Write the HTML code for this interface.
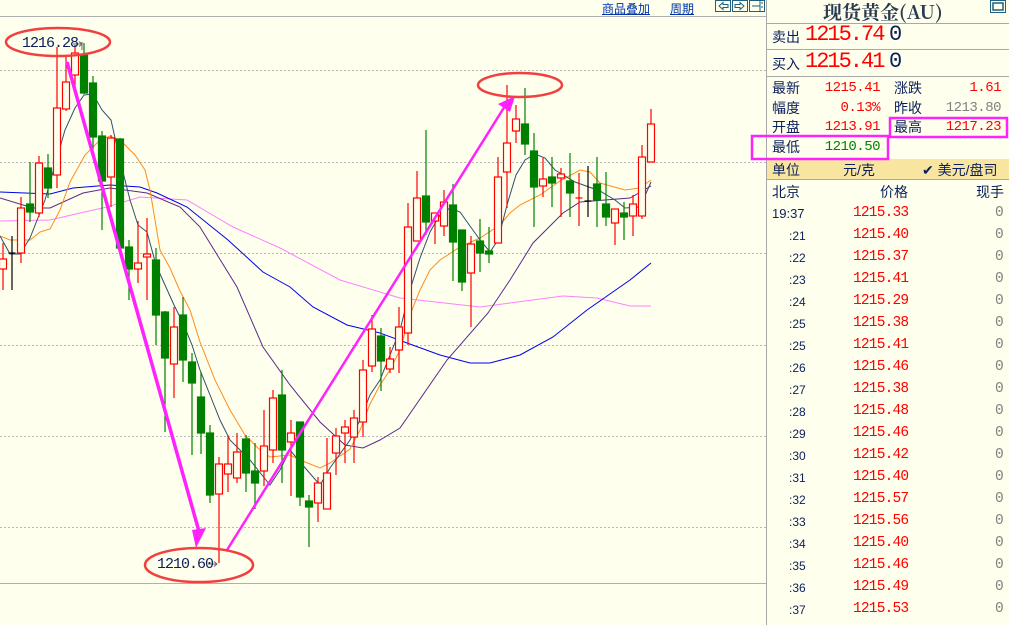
<!DOCTYPE html>
<html><head><meta charset="utf-8">
<style>
*{margin:0;padding:0;box-sizing:border-box}
body{width:1009px;height:625px;overflow:hidden;background:#FFFFEE;position:relative;font-family:"Liberation Sans","Noto Sans CJK SC",sans-serif}
.t{position:absolute;white-space:nowrap}
.nv{color:#0A1F5C}
.r{color:#FF0000}
.mono{font-family:"Liberation Mono","Noto Sans CJK SC",monospace}
</style></head><body>
<svg width="1009" height="625" style="position:absolute;left:0;top:0" xmlns="http://www.w3.org/2000/svg">
<rect width="1009" height="625" fill="#FFFFEE"/>
<line x1="0" y1="16.5" x2="766" y2="16.5" stroke="#B0B0B0"/>
<line x1="0" y1="583.5" x2="766" y2="583.5" stroke="#B0B0B0"/>
<g stroke="#B8B8B8" stroke-dasharray="2,2">
<line x1="0" y1="70.5" x2="766" y2="70.5"/><line x1="0" y1="162.5" x2="766" y2="162.5"/>
<line x1="0" y1="253.5" x2="766" y2="253.5"/><line x1="0" y1="345.5" x2="766" y2="345.5"/>
<line x1="0" y1="436.5" x2="766" y2="436.5"/><line x1="0" y1="527.5" x2="766" y2="527.5"/>
</g>
<line x1="766.5" y1="0" x2="766.5" y2="625" stroke="#A8A8A8"/>
<g stroke="#1F5F7F" fill="none">
<rect x="715.5" y="0.5" width="15" height="11"/><rect x="732.5" y="0.5" width="15" height="11"/><rect x="749.5" y="0.5" width="15" height="11"/>
<path d="M719 6 L723 2.5 L723 4.5 L728 4.5 L728 7.5 L723 7.5 L723 9.5 Z"/>
<path d="M744 6 L740 2.5 L740 4.5 L735 4.5 L735 7.5 L740 7.5 L740 9.5 Z"/>
<path d="M752 6 L760 6 M760 1 L760 11 M762 2 L762 4 M762 6 L762 8"/>
</g>
<g fill="none" stroke-width="1">
<polyline stroke="#FF80FF" points="0,221 50,220 80,213 107,207 140,197 187,200 233,227 280,248 340,280 400,298 480,307 563,296 597,298 630,306 651,306"/>
<polyline stroke="#0000EE" points="0,192 50,194 73,188 110,185 140,187 157,193 187,207 228,240 263,272 290,287 313,307 347,325 380,333 407,343 440,355 470,363 490,363 520,355 553,337 587,310 630,280 651,263"/>
<polyline stroke="#5A2A8A" points="0,198 33,208 50,208 83,193 110,188 147,193 180,207 200,227 208,240 237,287 263,347 290,385 320,422 345,445 363,448 380,440 400,428 447,360 488,313 510,280 533,243 563,213 580,202 630,198 651,186"/>
<polyline stroke="#FF8C1A" points="0,236 10,240 30,240 40,232 50,229 60,210 70,182 85,155 100,140 110,136 120,140 135,155 145,170 150,190 160,250 170,268 180,291 190,310 200,342 215,380 230,410 245,435 260,450 270,457 290,455 300,460 320,468 330,463 350,449 360,430 370,404 380,385 390,370 400,350 410,315 420,290 430,270 440,260 460,247 480,238 500,225 510,213 520,205 540,195 560,181 580,170 590,172 600,183 625,190 640,188 651,180"/>
<polyline stroke="#2F4F6F" points="0,236 10,254 20,254 30,238 45,200 55,165 65,130 75,108 84,95 93,94 102,110 111,120 120,160 130,200 138,225 147,232 156,265 165,285 174,305 183,323 192,345 200,370 210,395 220,420 230,440 250,460 270,485 280,470 290,450 300,462 320,485 330,468 350,440 360,420 370,395 380,380 392,350 400,330 410,290 420,258 430,232 440,215 450,208 460,212 480,240 490,252 498,240 507,205 516,175 525,160 535,154 545,158 555,170 575,182 600,191 615,200 625,208 640,207 651,182"/>
</g>
<g stroke-width="1.2">
<g stroke="#FF0000" fill="#FFFFEE">
<line x1="3" y1="243" x2="3" y2="290"/><rect x="-0.5" y="259" width="7" height="10"/>
<line x1="21" y1="197" x2="21" y2="263"/><rect x="17.5" y="208" width="7" height="45"/>
<line x1="39" y1="156" x2="39" y2="217"/><rect x="35.5" y="163" width="7" height="50"/>
<line x1="57" y1="47" x2="57" y2="188"/><rect x="53.5" y="108" width="7" height="67"/>
<line x1="66" y1="55" x2="66" y2="111"/><rect x="62.5" y="82" width="7" height="27"/>
<line x1="75" y1="45" x2="75" y2="90"/><rect x="71.5" y="53" width="7" height="22"/>
<line x1="111" y1="135" x2="111" y2="207"/><rect x="107.5" y="138" width="7" height="39"/>
<line x1="138" y1="221" x2="138" y2="283"/><rect x="134.5" y="263" width="7" height="6"/>
<line x1="147" y1="218" x2="147" y2="300"/><rect x="143.5" y="254" width="7" height="3"/>
<line x1="174" y1="307" x2="174" y2="398"/><rect x="170.5" y="327" width="7" height="37"/>
<line x1="219" y1="457" x2="219" y2="563"/><rect x="215.5" y="464" width="7" height="30"/>
<line x1="228" y1="435" x2="228" y2="492"/><rect x="224.5" y="464" width="7" height="10"/>
<line x1="237" y1="433" x2="237" y2="483"/><rect x="233.5" y="452" width="7" height="26"/>
<line x1="264" y1="410" x2="264" y2="486"/><rect x="260.5" y="446" width="7" height="25"/>
<line x1="273" y1="390" x2="273" y2="463"/><rect x="269.5" y="398" width="7" height="52"/>
<line x1="291" y1="420" x2="291" y2="496"/><rect x="287.5" y="433" width="7" height="9"/>
<line x1="318" y1="477" x2="318" y2="522"/><rect x="314.5" y="483" width="7" height="20"/>
<line x1="327" y1="438" x2="327" y2="509"/><rect x="323.5" y="473" width="7" height="36"/>
<line x1="336" y1="428" x2="336" y2="475"/><rect x="332.5" y="436" width="7" height="17"/>
<line x1="345" y1="420" x2="345" y2="463"/><rect x="341.5" y="427" width="7" height="6"/>
<line x1="354" y1="410" x2="354" y2="463"/><rect x="350.5" y="418" width="7" height="19"/>
<line x1="363" y1="360" x2="363" y2="437"/><rect x="359.5" y="370" width="7" height="52"/>
<line x1="372" y1="315" x2="372" y2="372"/><rect x="368.5" y="329" width="7" height="37"/>
<line x1="390" y1="347" x2="390" y2="373"/><rect x="386.5" y="359" width="7" height="10"/>
<line x1="399" y1="307" x2="399" y2="373"/><rect x="395.5" y="327" width="7" height="23"/>
<line x1="408" y1="203" x2="408" y2="345"/><rect x="404.5" y="227" width="7" height="106"/>
<line x1="417" y1="171" x2="417" y2="241"/><rect x="413.5" y="198" width="7" height="43"/>
<line x1="435" y1="213" x2="435" y2="244"/><rect x="431.5" y="213" width="7" height="8"/>
<line x1="444" y1="190" x2="444" y2="236"/><rect x="440.5" y="202" width="7" height="24"/>
<line x1="471" y1="236" x2="471" y2="327"/><rect x="467.5" y="244" width="7" height="29"/>
<line x1="498" y1="157" x2="498" y2="243"/><rect x="494.5" y="177" width="7" height="66"/>
<line x1="507" y1="85" x2="507" y2="208"/><rect x="503.5" y="143" width="7" height="29"/>
<line x1="516" y1="105" x2="516" y2="143"/><rect x="512.5" y="119" width="7" height="12"/>
<line x1="543" y1="158" x2="543" y2="197"/><rect x="539.5" y="179" width="7" height="7"/>
<line x1="561" y1="168" x2="561" y2="217"/><rect x="557.5" y="174" width="7" height="4"/>
<line x1="579" y1="173" x2="579" y2="226"/><line x1="575.5" y1="198" x2="582.5" y2="198"/>
<line x1="615" y1="209" x2="615" y2="245"/><rect x="611.5" y="209" width="7" height="14"/>
<line x1="633" y1="195" x2="633" y2="236"/><rect x="629.5" y="204" width="7" height="12"/>
<line x1="642" y1="145" x2="642" y2="219"/><rect x="638.5" y="157" width="7" height="59"/>
<line x1="651" y1="109" x2="651" y2="162"/><rect x="647.5" y="124" width="7" height="38"/>
</g>
<g stroke="#000">
<line x1="12" y1="236" x2="12" y2="290"/><line x1="8.5" y1="253" x2="15.5" y2="253"/>
<line x1="588" y1="166" x2="588" y2="217"/><line x1="584.5" y1="201" x2="591.5" y2="201"/>
</g>
<g stroke="#008000" fill="#008000">
<line x1="30" y1="162" x2="30" y2="222"/><rect x="26.5" y="204" width="7" height="8"/>
<line x1="48" y1="154" x2="48" y2="198"/><rect x="44.5" y="168" width="7" height="20"/>
<line x1="84" y1="43" x2="84" y2="94"/><rect x="80.5" y="55" width="7" height="38"/>
<line x1="93" y1="76" x2="93" y2="157"/><rect x="89.5" y="83" width="7" height="54"/>
<line x1="102" y1="131" x2="102" y2="230"/><rect x="98.5" y="136" width="7" height="45"/>
<line x1="120" y1="138" x2="120" y2="248"/><rect x="116.5" y="139" width="7" height="109"/>
<line x1="129" y1="240" x2="129" y2="300"/><rect x="125.5" y="247" width="7" height="22"/>
<line x1="156" y1="248" x2="156" y2="345"/><rect x="152.5" y="260" width="7" height="55"/>
<line x1="165" y1="311" x2="165" y2="432"/><rect x="161.5" y="312" width="7" height="46"/>
<line x1="183" y1="297" x2="183" y2="382"/><rect x="179.5" y="315" width="7" height="45"/>
<line x1="192" y1="353" x2="192" y2="455"/><rect x="188.5" y="362" width="7" height="21"/>
<line x1="201" y1="372" x2="201" y2="454"/><rect x="197.5" y="397" width="7" height="36"/>
<line x1="210" y1="425" x2="210" y2="503"/><rect x="206.5" y="433" width="7" height="62"/>
<line x1="246" y1="435" x2="246" y2="492"/><rect x="242.5" y="439" width="7" height="34"/>
<line x1="255" y1="443" x2="255" y2="509"/><rect x="251.5" y="471" width="7" height="12"/>
<line x1="282" y1="370" x2="282" y2="483"/><rect x="278.5" y="395" width="7" height="55"/>
<line x1="300" y1="422" x2="300" y2="506"/><rect x="296.5" y="422" width="7" height="75"/>
<line x1="309" y1="495" x2="309" y2="547"/><rect x="305.5" y="501" width="7" height="6"/>
<line x1="381" y1="328" x2="381" y2="391"/><rect x="377.5" y="336" width="7" height="25"/>
<line x1="426" y1="130" x2="426" y2="235"/><rect x="422.5" y="196" width="7" height="26"/>
<line x1="453" y1="184" x2="453" y2="281"/><rect x="449.5" y="205" width="7" height="37"/>
<line x1="462" y1="230" x2="462" y2="291"/><rect x="458.5" y="230" width="7" height="52"/>
<line x1="480" y1="219" x2="480" y2="272"/><rect x="476.5" y="241" width="7" height="12"/>
<line x1="489" y1="227" x2="489" y2="263"/><rect x="485.5" y="251" width="7" height="3"/>
<line x1="525" y1="88" x2="525" y2="155"/><rect x="521.5" y="124" width="7" height="20"/>
<line x1="534" y1="133" x2="534" y2="227"/><rect x="530.5" y="151" width="7" height="36"/>
<line x1="552" y1="157" x2="552" y2="207"/><rect x="548.5" y="177" width="7" height="6"/>
<line x1="570" y1="153" x2="570" y2="217"/><rect x="566.5" y="181" width="7" height="12"/>
<line x1="597" y1="157" x2="597" y2="227"/><rect x="593.5" y="184" width="7" height="16"/>
<line x1="606" y1="172" x2="606" y2="226"/><rect x="602.5" y="204" width="7" height="13"/>
<line x1="624" y1="202" x2="624" y2="240"/><rect x="620.5" y="213" width="7" height="4"/>
</g>
</g>
<g stroke="#FF22FF" fill="#FF22FF">
<line x1="67" y1="62" x2="200" y2="535" stroke-width="3.5"/>
<polygon points="196,548 192,530 206,528" stroke="none"/>
<line x1="227" y1="550" x2="505" y2="106" stroke-width="2.5"/>
<polygon points="515,96 510,112 498,104" stroke="none"/>
</g>
<g fill="none" stroke="#F04040" stroke-width="2.5">
<ellipse cx="58" cy="42" rx="52" ry="14"/>
<ellipse cx="520" cy="85" rx="42" ry="12"/>
<ellipse cx="199" cy="565" rx="54" ry="17"/>
</g>
<g stroke="#666" fill="none"><path d="M73 44 L82 44 M79 41.5 L82 44 L79 46.5 M82 42 L82 50"/><path d="M208 564 L217 564 M214 561.5 L217 564 L214 566.5"/></g>
<g stroke="#A8A8A8">
<line x1="767" y1="23.5" x2="1009" y2="23.5"/><line x1="767" y1="49.5" x2="1009" y2="49.5"/><line x1="767" y1="76.5" x2="1009" y2="76.5"/>
</g>
<rect x="767" y="159" width="242" height="20" fill="#F8E6A0"/>
<line x1="767" y1="179.5" x2="1009" y2="179.5" stroke="#A8A8A8"/>
<rect x="990.5" y="0.5" width="15" height="12" fill="none" stroke="#1F5F7F"/>
<rect x="993" y="3" width="10" height="7" fill="none" stroke="#1F5F7F" stroke-width="1.5"/>
<g fill="none" stroke="#FF22FF" stroke-width="2.5">
<rect x="890" y="118" width="117" height="19"/>
<rect x="752" y="136" width="136" height="23"/>
</g>
</svg>
<div class="t mono nv" style="left:22px;top:35px;font-size:15px;letter-spacing:-1px">1216.28</div>
<div class="t mono nv" style="left:157px;top:556px;font-size:15px;letter-spacing:-1px">1210.60</div>
<div class="t" style="left:602px;top:0;font-size:12px;color:#0033AA;text-decoration:underline">商品叠加</div>
<div class="t" style="left:670px;top:0;font-size:12px;color:#0033AA;text-decoration:underline">周期</div>

<div class="t" style="left:823px;top:-2px;font-size:19px;font-weight:bold;color:#2A3A50;font-family:'Noto Serif CJK SC','Liberation Serif',serif">现货黄金(AU)</div>
<div class="t nv" style="left:772px;top:27px;font-size:14px">卖出</div>
<div class="t mono r" style="left:805px;top:22px;font-size:22px;letter-spacing:-2px">1215.74</div>
<div class="t mono nv" style="left:889px;top:22px;font-size:22px">0</div>
<div class="t nv" style="left:772px;top:54px;font-size:14px">买入</div>
<div class="t mono r" style="left:805px;top:49px;font-size:22px;letter-spacing:-2px">1215.41</div>
<div class="t mono nv" style="left:889px;top:49px;font-size:22px">0</div>

<div class="t nv" style="left:772px;top:79px;font-size:14px;line-height:19.5px">最新<br>幅度<br>开盘<br>最低</div>
<div class="t mono" style="right:129px;top:79px;font-size:14px;line-height:19.5px;text-align:right;letter-spacing:-0.5px"><span class="r">1215.41</span><br><span class="r">0.13%</span><br><span class="r">1213.91</span><br><span style="color:#008000">1210.50</span></div>
<div class="t nv" style="left:894px;top:79px;font-size:14px;line-height:19.5px">涨跌<br>昨收<br>最高</div>
<div class="t mono" style="right:8px;top:79px;font-size:14px;line-height:19.5px;text-align:right;letter-spacing:-0.5px"><span class="r">1.61</span><br><span style="color:#808080">1213.80</span><br><span class="r">1217.23</span></div>
<div class="t nv" style="left:772px;top:160px;font-size:14px">单位</div>
<div class="t nv" style="left:843px;top:160px;font-size:14px">元/克</div>
<div class="t nv" style="left:922px;top:160px;font-size:14px">✔ 美元/盘司</div>
<div class="t nv" style="left:772px;top:182px;font-size:14px">北京</div>
<div class="t nv" style="left:880px;top:182px;font-size:14px">价格</div>
<div class="t nv" style="left:976px;top:182px;font-size:14px">现手</div>

<div class="t nv" style="left:772px;top:203px;font-size:13px;line-height:22px">19:37</div>
<div class="t nv" style="left:789px;top:225px;font-size:12px;line-height:22px">:21<br>:22<br>:23<br>:24<br>:25<br>:25<br>:26<br>:27<br>:28<br>:29<br>:30<br>:31<br>:32<br>:33<br>:34<br>:35<br>:36<br>:37</div>
<div class="t mono r" style="left:853px;top:202px;font-size:14.5px;line-height:22px;letter-spacing:-0.8px">1215.33<br>1215.40<br>1215.37<br>1215.41<br>1215.29<br>1215.38<br>1215.41<br>1215.46<br>1215.38<br>1215.48<br>1215.46<br>1215.42<br>1215.40<br>1215.57<br>1215.56<br>1215.40<br>1215.46<br>1215.49<br>1215.53</div>
<div class="t mono" style="left:995px;top:202px;font-size:14.5px;line-height:22px;color:#808080">0<br>0<br>0<br>0<br>0<br>0<br>0<br>0<br>0<br>0<br>0<br>0<br>0<br>0<br>0<br>0<br>0<br>0<br>0</div>
</body></html>
